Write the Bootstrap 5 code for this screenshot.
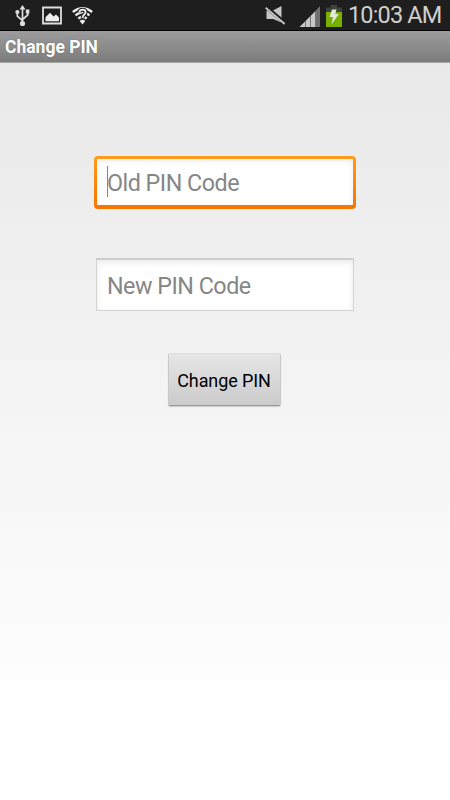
<!DOCTYPE html>
<html lang="en">
<head>
<meta charset="utf-8">
<meta name="viewport" content="width=device-width, initial-scale=1">
<title>Change PIN</title>
<link href="https://cdn.jsdelivr.net/npm/bootstrap@5.3.0/dist/css/bootstrap.min.css" rel="stylesheet">
<style>
body{font-family:Roboto,"Liberation Sans",sans-serif;height:800px;overflow:hidden;background:#fff}
.status-bar{height:31px;background:#1e1e1e;border-bottom:1px solid #000}
.status-bar svg{display:block;flex:none}
.clock{font-size:23.5px;line-height:31px;letter-spacing:-.85px;color:#cfcfcf;margin-left:6px;width:102px;white-space:nowrap}
.title-bar{height:32px;background:linear-gradient(#9c9c9c,#7c7c7c);border-bottom:1px solid #a5a5a5;padding-left:5px}
.title-bar h1{font-size:17.5px;font-weight:700;line-height:33px;color:#fff;text-shadow:0 0 1px #666}
.screen{background:linear-gradient(#e9e9e9,#fff 91%);padding-top:93px}
.pin-field{width:262px;height:53px}
.pin-field .form-control{height:100%;border-radius:0;font-size:23.3px;letter-spacing:-.5px;color:#222;box-shadow:none}
.pin-field .form-control::placeholder{color:#868686;opacity:1}
.pin-active{border-radius:4px;padding:3px 3px 4px;background:linear-gradient(#ff9d1c,#f57600)}
.pin-active .form-control{border:0;padding:2px 10px 0;border-radius:1px;box-shadow:inset 0 2px 6px #ececec}
.caret{left:13px;top:10px;width:1px;height:31px;background:#858585}
.pin-idle{margin-top:49px;padding:0 2px}
.pin-idle .form-control{border:1px solid #d3d3d3;border-top:2px solid #cdcdcd;padding:1px 10px 0;box-shadow:inset 0 2px 6px #e9e9e9}
.btn-pin{margin-top:42px;margin-right:2px;width:113px;height:53px;padding:1px 0 0;font-size:18px;letter-spacing:-.1px;color:#000;border:1px solid #c9c9c9;border-top-color:#ddd;border-bottom:1px solid #999;border-radius:2px;background:linear-gradient(#e6e6e6,#cbcbcb);box-shadow:0 1px 1px #ccc}
</style>
<script src="https://cdn.jsdelivr.net/npm/bootstrap@5.3.0/dist/js/bootstrap.bundle.min.js"></script>
</head>
<body class="d-flex flex-column">
<header class="status-bar d-flex flex-shrink-0">
  <!-- USB -->
  <svg width="42" height="30" viewBox="0 0 42 30" fill="none" stroke="#dedede">
    <path d="M22.5 8V23M17.3 12V16.2L22.5 20.5M27.7 12V15L22.5 19.5" stroke-width="1.7"/>
    <path d="M19.5 9.5L22.5 5L25.5 9.5Z" fill="#dedede" stroke="none"/>
    <circle cx="22.5" cy="23.5" r="2.6" fill="#dedede" stroke="none"/>
    <circle cx="17.4" cy="12" r="2.1" fill="#dedede" stroke="none"/>
    <path d="M25.8 9.5h3.6v4H25.8z" fill="#dedede" stroke="none"/>
  </svg>
  <!-- Picture -->
  <svg width="20" height="30" viewBox="0 0 20 30">
    <path d="M1 7.5H19V23.5H1Z" fill="none" stroke="#dedede" stroke-width="1.8"/>
    <path d="M3.5 21.3V17.2L8 12.8L11.5 16.5L14 14.6L17 17.5V21.3Z" fill="#eee"/>
  </svg>
  <!-- Unknown wifi -->
  <svg width="32" height="30" viewBox="0 0 32 30">
    <g fill="none" stroke="#e8e8e8" stroke-width="2.4">
      <path d="M10.8 12Q20.5 4.500 30.200 12M13.500 15.400Q20.5 9.300 27.500 15.400M16.300 18.700Q20.5 14.800 24.700 18.700"/>
    </g>
    <path d="M17.600 21L20.500 24.500L23.400 21Q20.500 18.600 17.600 21Z" fill="#e8e8e8"/>
    <g fill="none">
      <path d="M17.4 12.4Q17.6 9.700 20.5 9.700Q23.600 9.700 23.600 12.2Q23.600 13.600 22 14.700Q20.7 15.700 20.7 17.800" stroke="#1e1e1e" stroke-width="4"/>
      <path d="M17.4 12.4Q17.6 9.700 20.5 9.700Q23.600 9.700 23.600 12.2Q23.600 13.600 22 14.700Q20.7 15.700 20.7 17.800" stroke="#f2f2f2" stroke-width="1.800"/>
    </g>
  </svg>
  <!-- Muted -->
  <svg class="ms-auto" width="22" height="30" viewBox="0 0 22 30">
    <path d="M3.5 10.500H10L18.5 6V22.5L10 19H3.5Z" fill="#c6c6c6"/>
    <path d="M2.500 6.500L23 23.800" stroke="#1e1e1e" stroke-width="3.800"/>
    <path d="M2.700 7.700L21.700 24" stroke="#c6c6c6" stroke-width="1.800"/>
  </svg>
  <!-- Signal -->
  <svg width="35" height="30" viewBox="0 0 35 30">
    <path d="M14.5 27L30 11.500V27Z" fill="#c9c9c9"/>
    <path d="M30 11.500L35 6V27H30Z" fill="#707070"/>
    <path d="M20.500 21V27M25.500 16V27M30.500 11V27" stroke="#777" stroke-width="1"/>
  </svg>
  <!-- Charging battery -->
  <svg width="22" height="30" viewBox="0 0 22 30">
    <path d="M6 7.5H11V5H17V7.5H22V12H6Z" fill="#414141"/>
    <path d="M6 12H22V27H6Z" fill="#78b000"/>
    <path d="M12 9.500H16.500L15.200 14H18.800L11.5 24.500L13 17H9.500Z" fill="#e3e9d8"/>
  </svg>
  <div class="clock">10:03 AM</div>
</header>
<div class="title-bar flex-shrink-0"><h1 class="m-0">Change PIN</h1></div>
<main class="screen flex-grow-1 d-flex flex-column align-items-center">
  <div class="pin-field pin-active position-relative">
    <input class="form-control" type="text" placeholder="Old PIN Code" aria-label="Old PIN Code">
    <span class="caret position-absolute"></span>
  </div>
  <div class="pin-field pin-idle">
    <input class="form-control" type="text" placeholder="New PIN Code" aria-label="New PIN Code">
  </div>
  <button type="button" class="btn btn-pin">Change PIN</button>
</main>
</body>
</html>
